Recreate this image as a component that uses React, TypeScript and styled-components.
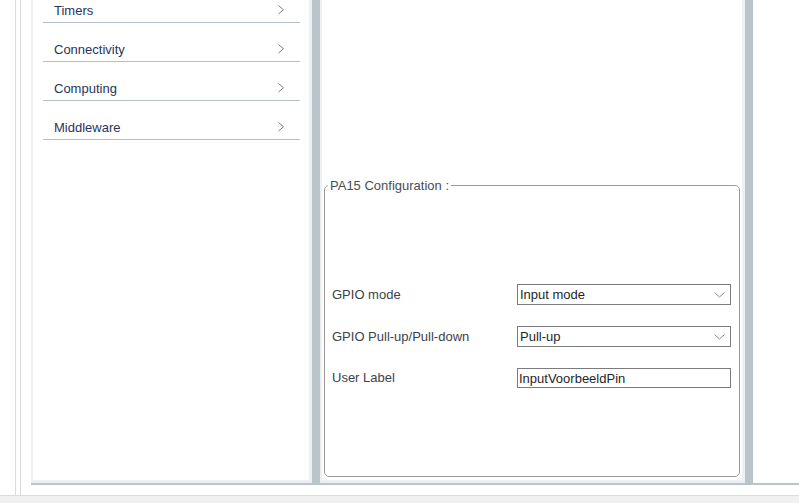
import React from "react";
import styled, { createGlobalStyle } from "styled-components";

const Global = createGlobalStyle`
  html, body { margin: 0; padding: 0; background: #ffffff; }
  body {
    font-family: "Liberation Sans", Arial, sans-serif;
    font-size: 13px;
    overflow: hidden;
  }
  * { box-sizing: border-box; }
`;

const Screen = styled.div`
  width: 799px;
  height: 503px;
  display: flex;
  flex-direction: column;
  overflow: hidden;
  background: #ffffff;
`;

const MainRow = styled.div`
  flex: 0 0 495px;
  display: flex;
  min-height: 0;
`;

const SideStrip = styled.div`
  flex: none;
  width: 16px;
  border-right: 1px solid #dcdcdc;
`;

const Frame = styled.div`
  flex: 1;
  min-width: 0;
  display: flex;
  margin-left: 4px;
  border-left: 1px solid #dcdcdc;
  padding: 0 0 10px 10px;
`;

const Workspace = styled.div`
  flex: 1;
  min-width: 0;
  display: flex;
  gap: 8px;
  background: #b9c4cb;
  padding-bottom: 2px;
`;

const Panel = styled.div<{ $width?: number }>`
  flex: ${(p) => (p.$width ? `0 0 ${p.$width}px` : "1")};
  min-width: 0;
  background: #ffffff;
  border-style: solid;
  border-color: #edf0f2;
  border-width: 0 3px 3px 2px;
`;

const PlainPanel = styled.div`
  flex: 1;
  min-width: 0;
  background: #ffffff;
`;

const MenuPanel = styled(Panel)`
  padding: 0 9px 0 10px;
  overflow: hidden;
`;

const Menu = styled.ul`
  list-style: none;
  margin: -16px 0 0 0;
  padding: 0;
`;

const MenuItem = styled.li`
  height: 39px;
  display: flex;
  align-items: flex-end;
  padding: 0 14px 3px 11px;
  border-bottom: 1px solid #b6bec6;
  color: #27355a;
  line-height: 16px;
  font-size: 13px;
`;

const MenuText = styled.span`
  flex: 1;
`;

const Chevron = styled.svg`
  flex: none;
  display: block;
`;

const ConfigPanel = styled(Panel)`
  display: flex;
  flex-direction: column;
  justify-content: flex-end;
  padding: 0 2px 3px 2px;
`;

const Group = styled.fieldset`
  margin: 0;
  height: 299px;
  min-width: 0;
  border: 1px solid #9a9a9a;
  border-radius: 5px;
  padding: 0 3px;
`;

const Legend = styled.legend`
  padding: 0 2px;
  font-size: 13px;
  line-height: 15px;
  color: #484d5a;
`;

const FormGrid = styled.div`
  display: grid;
  grid-template-columns: 185px 214px;
  row-gap: 21px;
  align-items: center;
  padding: 91px 4px 0 4px;
`;

const Label = styled.div`
  color: #3d414b;
  font-size: 13px;
  line-height: 16px;
`;

const SelectBox = styled.div`
  height: 21px;
  display: flex;
  align-items: center;
  justify-content: space-between;
  border: 1px solid #7c7c7c;
  padding: 0 5px 0 2px;
  color: #1f1f1f;
  font-size: 13px;
  background: #ffffff;
`;

const TextField = styled.input`
  height: 20px;
  width: 214px;
  border: 1px solid #7c7c7c;
  padding: 0 1px;
  margin: 0;
  font-family: "Liberation Sans", Arial, sans-serif;
  font-size: 13px;
  color: #1f1f1f;
  outline: none;
  background: #ffffff;
`;

const StatusBar = styled.div`
  flex: 1;
  border-top: 1px solid #dcdcdc;
  background: #f0f0f0;
`;

const RightChevron = () => (
  <Chevron width="8" height="16" viewBox="0 0 8 16">
    <polyline points="0.5,2.5 5.5,6.75 0.5,11" fill="none" stroke="#7d7d7d" strokeWidth="1" />
  </Chevron>
);

const DownChevron = () => (
  <Chevron width="11" height="6" viewBox="0 0 11 6">
    <polyline points="0.5,0.5 5.5,5 10.5,0.5" fill="none" stroke="#8a8a8a" strokeWidth="1" />
  </Chevron>
);

const categories = ["Timers", "Connectivity", "Computing", "Middleware"];

export default function App() {
  return (
    <>
      <Global />
      <Screen>
        <MainRow>
          <SideStrip />
          <Frame>
            <Workspace>
              <MenuPanel $width={281}>
                <Menu>
                  {categories.map((c) => (
                    <MenuItem key={c}>
                      <MenuText>{c}</MenuText>
                      <RightChevron />
                    </MenuItem>
                  ))}
                </Menu>
              </MenuPanel>
              <ConfigPanel $width={425}>
                <Group>
                  <Legend>PA15 Configuration :</Legend>
                  <FormGrid>
                    <Label>GPIO mode</Label>
                    <SelectBox>
                      <span>Input mode</span>
                      <DownChevron />
                    </SelectBox>
                    <Label>GPIO Pull-up/Pull-down</Label>
                    <SelectBox>
                      <span>Pull-up</span>
                      <DownChevron />
                    </SelectBox>
                    <Label>User Label</Label>
                    <TextField defaultValue="InputVoorbeeldPin" readOnly />
                  </FormGrid>
                </Group>
              </ConfigPanel>
              <PlainPanel />
            </Workspace>
          </Frame>
        </MainRow>
        <StatusBar />
      </Screen>
    </>
  );
}
